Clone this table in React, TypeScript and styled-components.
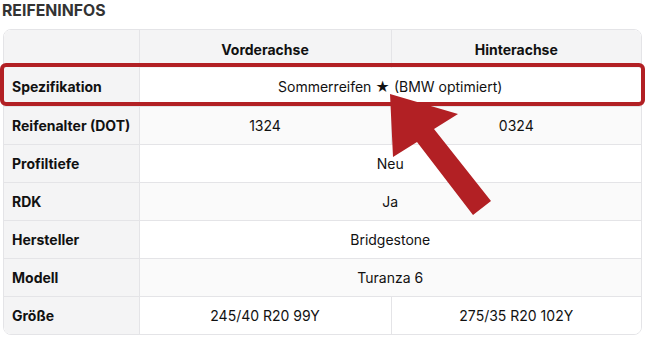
import React from "react";
import styled, { createGlobalStyle } from "styled-components";

const GlobalStyle = createGlobalStyle`
  body {
    margin: 0;
    background: #ffffff;
    font-family: Inter, "Noto Sans", "Liberation Sans", sans-serif;
    color: #111111;
  }
`;

const Page = styled.div`
  position: relative;
  width: 646px;
  height: 340px;
  padding: 0 3px;
  box-sizing: border-box;
`;

const Title = styled.h2`
  margin: 1px 0 8px -1px;
  font-size: 15.8px;
  line-height: 20px;
  font-weight: 700;
  color: #333333;
`;

const TableWrap = styled.div`
  position: relative;
  width: 639px;
`;

const Frame = styled.div`
  border: 1px solid #e4e4e7;
  border-radius: 8px;
  overflow: hidden;
`;

const Table = styled.table`
  width: 100%;
  border-collapse: collapse;
  table-layout: fixed;
  font-size: 14px;
`;

const Row = styled.tr<{ $striped?: boolean }>`
  height: 38px;
  background: ${(p) => (p.$striped ? "#fafafa" : "#ffffff")};

  & > * {
    border-bottom: 1px solid #e4e4e7;
    border-right: 1px solid #e4e4e7;
  }
  & > *:last-child {
    border-right: none;
  }
  &:last-child > * {
    border-bottom: none;
  }
`;

const HeadCell = styled.th`
  background: #f4f4f5;
  font-weight: 700;
  text-align: center;
  padding: 0;
`;

const Label = styled.th`
  background: #f4f4f5;
  font-weight: 700;
  text-align: left;
  padding: 0 0 0 8px;
`;

const Value = styled.td`
  text-align: center;
  padding: 0;
`;

const Highlight = styled.div`
  position: absolute;
  left: -3px;
  right: -3px;
  top: 34px;
  height: 43px;
  border: 4px solid #b22024;
  border-radius: 6px;
  box-sizing: border-box;
  pointer-events: none;
`;

const ArrowLayer = styled.svg`
  position: absolute;
  left: 0;
  top: 0;
  pointer-events: none;
`;

type Spec = { label: string; front: string; rear?: string };

const rows: Spec[] = [
  { label: "Spezifikation", front: "Sommerreifen ★ (BMW optimiert)" },
  { label: "Reifenalter (DOT)", front: "1324", rear: "0324" },
  { label: "Profiltiefe", front: "Neu" },
  { label: "RDK", front: "Ja" },
  { label: "Hersteller", front: "Bridgestone" },
  { label: "Modell", front: "Turanza 6" },
  { label: "Größe", front: "245/40 R20 99Y", rear: "275/35 R20 102Y" },
];

export default function App() {
  return (
    <Page>
      <GlobalStyle />
      <Title>REIFENINFOS</Title>
      <TableWrap>
        <Frame>
          <Table>
            <colgroup>
              <col style={{ width: 135 }} />
              <col style={{ width: 252 }} />
              <col />
            </colgroup>
            <thead>
              <Row>
                <HeadCell />
                <HeadCell>Vorderachse</HeadCell>
                <HeadCell>Hinterachse</HeadCell>
              </Row>
            </thead>
            <tbody>
              {rows.map((r, i) => (
                <Row key={r.label} $striped={i % 2 === 1}>
                  <Label>{r.label}</Label>
                  {r.rear ? (
                    <>
                      <Value>{r.front}</Value>
                      <Value>{r.rear}</Value>
                    </>
                  ) : (
                    <Value colSpan={2}>{r.front}</Value>
                  )}
                </Row>
              ))}
            </tbody>
          </Table>
        </Frame>
        <Highlight />
      </TableWrap>
      <ArrowLayer width="646" height="340" viewBox="0 0 646 340">
        <polygon
          points="390,93 458,113 434,128 491,200 473,214 417,141 393,156"
          fill="#b22024"
        />
      </ArrowLayer>
    </Page>
  );
}
